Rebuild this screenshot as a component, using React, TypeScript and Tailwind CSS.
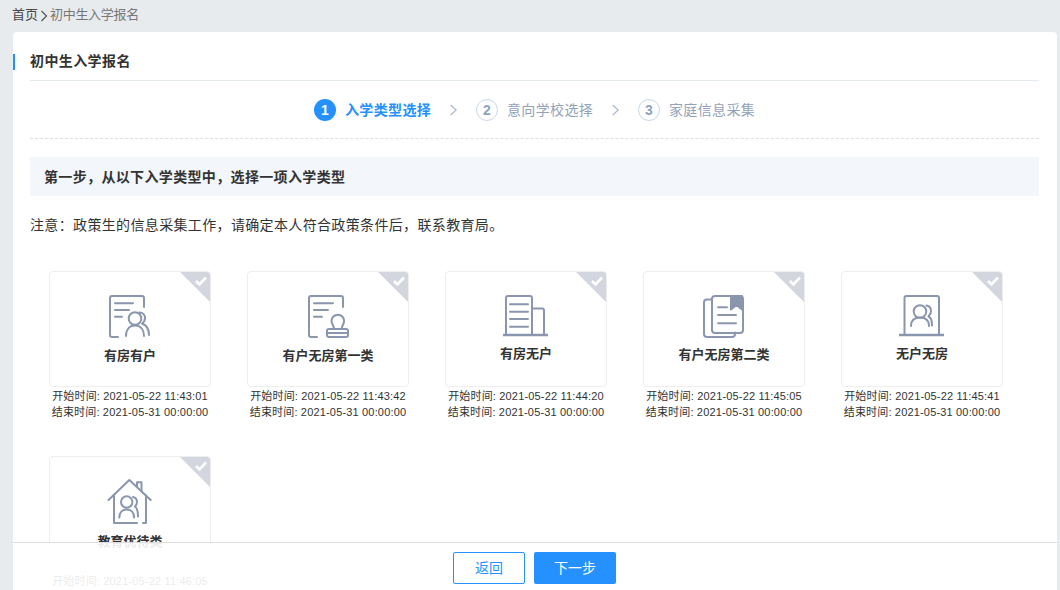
import type { ReactNode } from "react";

const font = "font-['Liberation_Sans','Noto_Sans_CJK_SC',sans-serif]";

// all icons share a 60 wide box, coordinates read off the screenshot
function Icon({ h, children }: { h: number; children: ReactNode }) {
  return (
    <svg
      width={60}
      height={h}
      viewBox={`0 0 60 ${h}`}
      fill="none"
      stroke="#8996ad"
      strokeWidth={2}
      strokeLinecap="round"
      strokeLinejoin="round"
    >
      {children}
    </svg>
  );
}

const icons = [
  <Icon h={48} key="a">
    <path d="M44 16V7a2 2 0 0 0-2-2H12a2 2 0 0 0-2 2v37a2 2 0 0 0 2 2h6" />
    <path d="M15 12.300h18M15 19h14M15 25.700h7" />
    <circle cx="35" cy="27.500" r="6.300" />
    <path d="M26 45c0-6.500 3.500-10.500 9-10.500s9 4 9 10.500" />
    <path d="M39.500 21.500c3.500 0 5.500 2.500 5.500 5.500s-1.500 4.500-3 5.500c4 1.500 7 5.500 7 11.500" />
  </Icon>,
  <Icon h={48} key="b">
    <path d="M45 16V7a2 2 0 0 0-2-2H13a2 2 0 0 0-2 2v37a2 2 0 0 0 2 2h6" />
    <path d="M16 12.300h19M16 19h14M16 25.700h8" />
    <path d="M36 38c0-3.500-2.500-4.500-2.500-8a6.300 6.300 0 0 1 12.600 0c0 3.500-2.500 4.500-2.500 8" />
    <rect x="29" y="38" width="21" height="8" rx="2" />
    <path d="M29 42h21" />
  </Icon>,
  <Icon h={46} key="c">
    <path d="M10 44V7a2 2 0 0 1 2-2h22a2 2 0 0 1 2 2v37" />
    <path d="M36 17.500h10a2 2 0 0 1 2 2V44" />
    <path d="M14 13.300h18M14 20.700h18M14 28h18M14 35.700h18" />
    <path d="M7 44h45" strokeWidth={2.600} strokeLinecap="butt" />
  </Icon>,
  <Icon h={47} key="d">
    <path d="M18 8.500h-5a3 3 0 0 0-3 3V43a3 3 0 0 0 3 3h25a3 3 0 0 0 3-3v-1.500" />
    <path d="M37 5H21a3 3 0 0 0-3 3v31a3 3 0 0 0 3 3h25a3 3 0 0 0 3-3V8a3 3 0 0 0-3-3h-2" />
    <path d="M37 5h11v13.500l-5.500-4.500-5.500 4.500z" fill="#8996ad" />
    <path d="M24 16.300h9M24 24h18M24 32.300h18" />
  </Icon>,
  <Icon h={46} key="e">
    <path d="M12.500 44V7a2 2 0 0 1 2-2h30.500a2 2 0 0 1 2 2v37" />
    <path d="M7 44h45" strokeWidth={2.600} strokeLinecap="butt" />
    <circle cx="28" cy="20.500" r="6.300" />
    <path d="M19 35c0-5.500 3.500-8.500 9-8.500s9 3 9 8.500" />
    <path d="M34.500 14.500c3 .5 4.500 3 4.500 5.500s-1 4-2.500 5.500c2.500 1 3.500 4.500 3.500 9" />
  </Icon>,
  <Icon h={49} key="f">
    <path d="M8.500 24 29.300 4 50.700 24" />
    <path d="M37 11V6.300h4.500V15" />
    <path d="M14 19.500V47h23M46 19.500V47h-3" />
    <circle cx="26.700" cy="26" r="5.700" />
    <path d="M19.300 41.500c0-5 3-8 7.400-8s7.400 3 7.400 8" />
    <path d="M33 21c2.500.5 4 2.500 4 5s-1 3.500-2 4.500c2 1.500 3 5 3 10" />
  </Icon>,
];

const items = [
  { name: "有房有户", start: "2021-05-22 11:43:01" },
  { name: "有户无房第一类", start: "2021-05-22 11:43:42" },
  { name: "有房无户", start: "2021-05-22 11:44:20" },
  { name: "有户无房第二类", start: "2021-05-22 11:45:05" },
  { name: "无户无房", start: "2021-05-22 11:45:41" },
  { name: "教育优待类", start: "2021-05-22 11:46:05" },
];

const steps = ["入学类型选择", "意向学校选择", "家庭信息采集"];

// full width comma and colon, written as escapes on purpose
const heading = "第一步\uFF0C从以下入学类型中\uFF0C选择一项入学类型";
const note = "注意\uFF1A政策生的信息采集工作\uFF0C请确定本人符合政策条件后\uFF0C联系教育局\u3002";

function Chevron() {
  return (
    <svg width="7" height="12" viewBox="0 0 7 12" fill="none" stroke="#a9b6cb" strokeWidth="1.2" className="mx-[19px]">
      <path d="M.7 1l5.500 5-5.500 5" />
    </svg>
  );
}

export default function App() {
  return (
    <div className={`relative h-[590px] w-[1060px] overflow-hidden bg-[#e8ebee] text-[#333] ${font}`}>
      <div className="mb-[2px] flex h-[30px] items-center pl-3 text-[13px]">
        <span className="text-[#444]">首页</span>
        <svg width="8" height="12" viewBox="0 0 8 12" fill="none" stroke="#555" strokeWidth="1.2" className="mx-[2px] mt-[2px]">
          <path d="M1.500 1l5 5-5 5" />
        </svg>
        <span className="tracking-[-0.3px] text-[#777]">初中生入学报名</span>
      </div>

      <div className="ml-[13px] mr-[3px] h-[558px] rounded-t bg-white">
        <div className="h-[22px]" />
        <div className="h-4 border-l-2 border-[#2491ff] pl-[15px] text-sm leading-[14px] font-bold tracking-[0.4px]">初中生入学报名</div>

        <div className="pl-[17px] pr-[18px]">
          <div className="mt-[10px] border-b border-[#e4eaf0]" />

          <div className="flex h-[58px] items-center justify-center border-b border-dashed border-[#dcdfe3] text-sm tracking-[0.35px]">
            {steps.map((s, i) => (
              <div key={s} className="flex items-center">
                {i > 0 && <Chevron />}
                {i === 0 ? (
                  <span className="flex h-[22px] w-[22px] items-center justify-center rounded-full bg-[#2491ff] font-bold text-white">1</span>
                ) : (
                  <span className="flex h-[22px] w-[22px] items-center justify-center rounded-full border border-[#c9d8e8] font-bold text-[#8fa3bf]">{i + 1}</span>
                )}
                <span className={`ml-[9px] w-[86px] whitespace-nowrap ${i === 0 ? "font-bold text-[#2491ff]" : "text-[#93a2b8]"}`}>{s}</span>
              </div>
            ))}
          </div>

          <div className="mt-[18px] flex h-[39px] items-center bg-[#f3f6fb] pl-[14px] text-sm font-bold tracking-[0.35px]">{heading}</div>

          <p className="mt-[19px] text-sm leading-5 tracking-[0.35px]">{note}</p>

          <div className="mt-9 grid grid-cols-[repeat(5,162px)] gap-x-9 gap-y-9 pl-[19px]">
            {items.map((item, i) => (
              <div key={item.name}>
                <div className="relative flex h-[116px] flex-col items-center overflow-hidden rounded border border-[#eeeeee] pt-[19px]">
                  {icons[i]}
                  <div className="mt-[9px] text-[13px] leading-4 font-bold">{item.name}</div>
                  <div className="absolute top-0 right-0 h-[30px] w-[30px] bg-[#d3d6de] [clip-path:polygon(0_0,100%_0,100%_100%)]" />
                  <svg width="14" height="12" viewBox="0 0 14 12" fill="none" stroke="#fff" strokeWidth="2.600" className="absolute top-[3px] right-[2px]">
                    <path d="M2 6l3.500 3.500L12 2.500" />
                  </svg>
                </div>
                <div className="mt-px text-center text-[11px] leading-4 tracking-[0.17px]">
                  <div>开始时间: {item.start}</div>
                  <div>结束时间: 2021-05-31 00:00:00</div>
                </div>
              </div>
            ))}
          </div>
        </div>
      </div>

      <div className="absolute right-[3px] bottom-0 left-[13px] flex h-12 items-start justify-center gap-[9px] border-t border-[#dddddd] bg-white/90 pt-[9px] pr-px text-sm">
        <button className="h-8 w-[72px] rounded-[2px] border border-[#2491ff] bg-white text-[#2491ff]">返回</button>
        <button className="h-8 w-[82px] rounded-[2px] bg-[#2491ff] text-white">下一步</button>
      </div>
    </div>
  );
}
